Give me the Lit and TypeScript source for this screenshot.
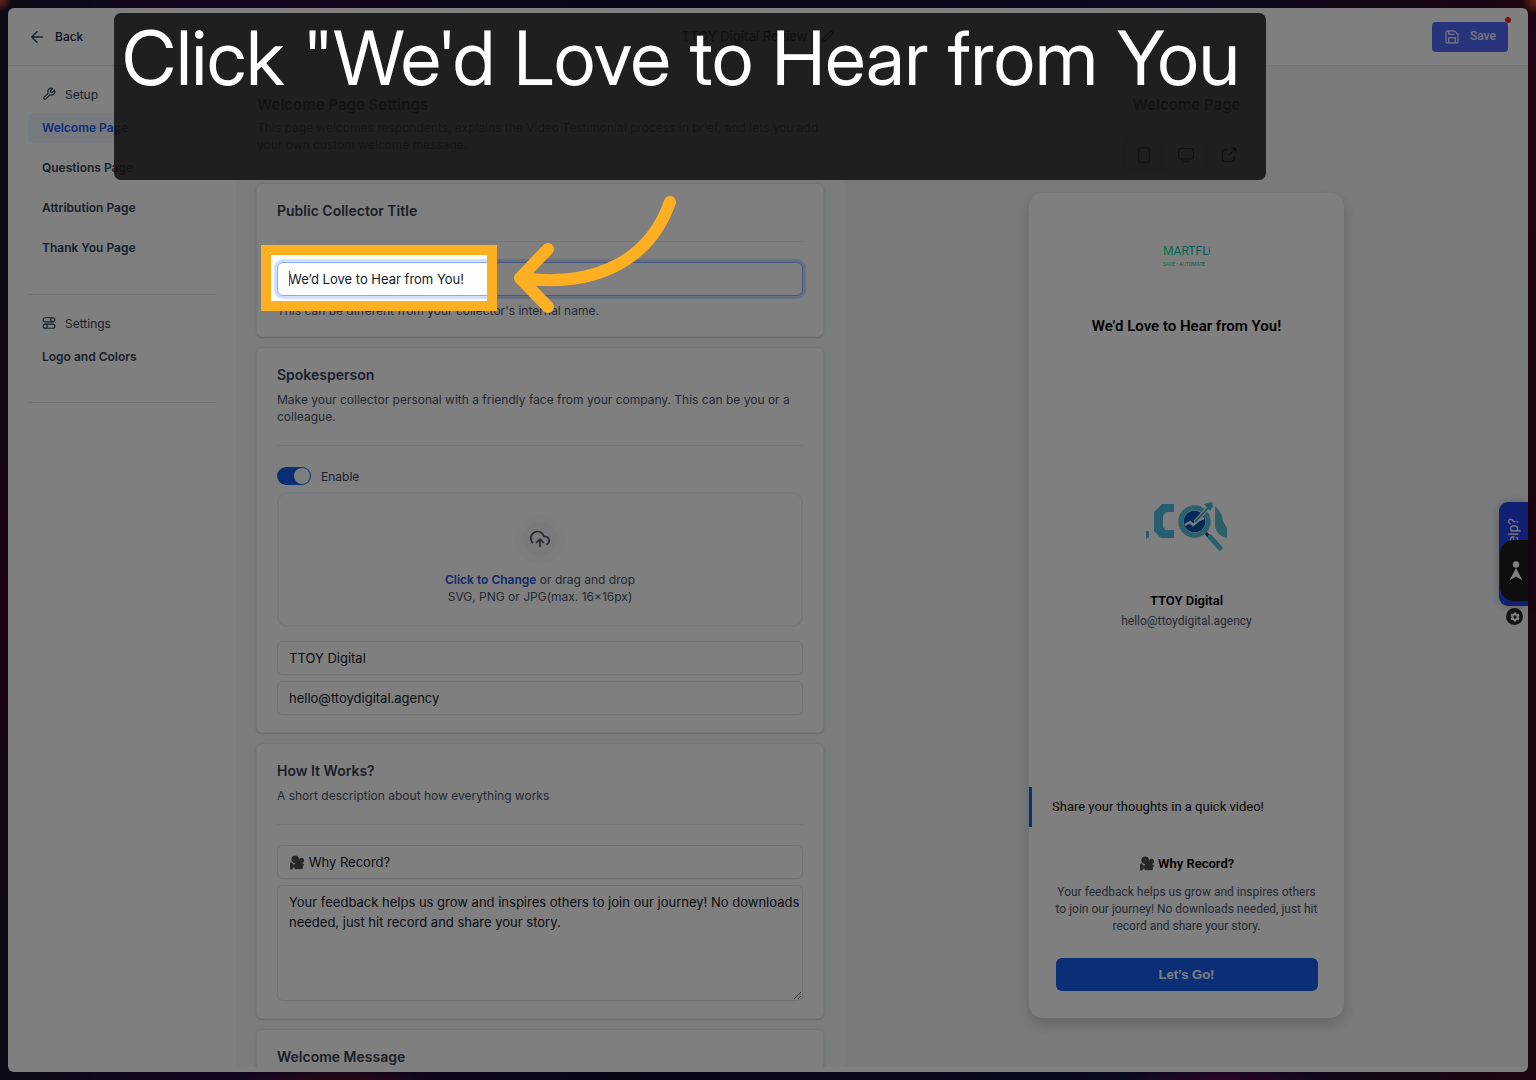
import { LitElement, html, svg, css } from "lit";
import { customElement, property } from "lit/decorators.js";
import { classMap } from "lit/directives/class-map.js";

const PATHS: Record<string, unknown> = {
  back: svg`<path d="M19 12H5M12 5l-7 7 7 7"/>`,
  wrench: svg`<path d="M14.7 6.3a1 1 0 0 0 0 1.4l1.6 1.6a1 1 0 0 0 1.4 0l3.77-3.77a6 6 0 0 1-7.94 7.94l-6.91 6.91a2.12 2.12 0 0 1-3-3l6.91-6.91a6 6 0 0 1 7.94-7.94z"/>`,
  settings: svg`<path d="M17 3H5.500a3.500 3.500 0 0 0 0 7H17"/><circle cx="18.500" cy="6.500" r="3.500"/><path d="M7 14h11.500a3.500 3.500 0 0 1 0 7H7"/><circle cx="5.500" cy="17.500" r="3.500"/>`,
  pencil: svg`<path d="M17 3a2.830 2.830 0 0 1 4 4L7.500 20.500 2 22l1.500-5.500z"/>`,
  save: svg`<path d="M7 3v4a1 1 0 0 0 1 1h7M17 21v-7a1 1 0 0 0-1-1H8a1 1 0 0 0-1 1v7M21 9.300V16.200c0 1.700 0 2.500-.3 3.200a3 3 0 0 1-1.300 1.300c-.7.3-1.500.3-3.200.3H7.800c-1.700 0-2.500 0-3.200-.3a3 3 0 0 1-1.300-1.300C3 18.700 3 17.900 3 16.200V7.800c0-1.700 0-2.500.3-3.200a3 3 0 0 1 1.300-1.300C5.300 3 6.100 3 7.800 3h6.900c.5 0 .7 0 1 .1.2 0 .4.100.6.200.2.100.4.300.7.600l3.100 3.100c.3.300.5.500.6.700.1.200.2.400.2.600.1.300.1.500.1 1z"/>`,
  phone: svg`<rect x="4" y="1" width="16" height="22" rx="2.500"/><path d="M12 17.500h.01"/>`,
  monitor: svg`<rect x="1" y="2" width="22" height="16" rx="3.500"/><path d="M8 22h8M12 18v4"/>`,
  external: svg`<path d="M22 8.500V2h-6.500M22 2l-9.500 9.500M10 4H7a5 5 0 0 0-5 5v8a5 5 0 0 0 5 5h8a5 5 0 0 0 5-5v-3"/>`,
  upload: svg`<path d="M8 16l4-4 4 4M12 12v9M20.390 18.390A5 5 0 0 0 18 9h-1.260A8 8 0 1 0 3 16.300"/>`,
};

@customElement("ui-icon")
export class UiIcon extends LitElement {
  @property() name = "";
  static styles = css`
    :host { display: block; width: 16px; height: 16px; flex: none; }
    .glyph { display: block; width: 100%; height: 100%; fill: none; stroke: currentColor; stroke-width: 2; stroke-linecap: round; stroke-linejoin: round; }
  `;
  render() {
    return html`<svg class="glyph" viewBox="0 0 24 24" aria-hidden="true">${PATHS[this.name]}</svg>`;
  }
}

const SETUP = ["Welcome Page", "Questions Page", "Attribution Page", "Thank You Page"];
const FEEDBACK =
  "Your feedback helps us grow and inspires others to join our journey! No downloads needed, just hit record and share your story.";

@customElement("app-root")
export class AppRoot extends LitElement {
  static styles = css`
    :host {
      display: block;
      position: relative;
      height: 100vh;
      overflow: hidden;
      box-sizing: border-box;
      padding: 8px;
      font-family: Inter, "Liberation Sans", sans-serif;
      font-size: 12px;
      line-height: 17px;
      color: #475467;
      background:
        radial-gradient(circle at 0 0, #d8502c 0, transparent 12px),
        radial-gradient(circle at 100% 0, #d8502c 0, transparent 14px),
        radial-gradient(ellipse 100px 12px at 340px 100%, #50102c, transparent),
        radial-gradient(ellipse 100px 16px at 1220px 100%, #560a50, transparent),
        radial-gradient(ellipse 24px 320px at 0 56%, #3c0420, transparent),
        radial-gradient(ellipse 24px 300px at 100% 12%, #480a20, transparent),
        linear-gradient(90deg, #17142e, #2b0c40 14%, #100e2c 40%, #141440 76%, #3a0c20 100%);
    }
    * { box-sizing: border-box; }
    h1, h2, h3, p { margin: 0; }
    button, input, textarea { font: inherit; color: inherit; }
    button { cursor: pointer; }
    .window { height: 100%; display: flex; flex-direction: column; overflow: hidden; border-radius: 6px; background: #fff; padding-bottom: 5px; }
    .header { flex: none; height: 58px; display: grid; grid-template-columns: 1fr auto 1fr; align-items: center; padding: 0 20px; border-bottom: 1px solid #e4e7ec; }
    .back { justify-self: start; display: flex; align-items: center; gap: 9px; padding: 0; border: 0; background: none; font-size: 12px; font-weight: 500; color: #1d2939; }
    .back ui-icon { width: 18px; height: 18px; color: #344054; }
    .name { display: flex; align-items: center; gap: 14px; margin-right: 20px; font-size: 13px; font-weight: 500; color: #101828; }
    .name ui-icon { width: 13px; height: 13px; }
    .save { position: relative; justify-self: end; display: flex; align-items: center; gap: 10px; height: 30px; padding: 0 12px; border: 0; border-radius: 4px; background: #4f67f5; color: #e6e8ff; font-family: Roboto, sans-serif; font-size: 12px; font-weight: 600; }
    .save::after { content: ""; position: absolute; top: -5px; right: -3px; width: 6px; height: 6px; border-radius: 50%; background: #f0281e; }
    .body { flex: 1; min-height: 0; display: flex; }
    .sidebar { flex: none; width: 228px; padding: 0 20px; }
    .group { padding: 13px 0 31px; border-bottom: 1px solid #e4e7ec; }
    .group-last { padding-bottom: 30px; }
    .group-title { display: flex; align-items: center; gap: 9px; height: 30px; margin-bottom: 4px; padding-left: 14px; font-size: 12px; font-weight: 400; color: #344054; }
    .group-title ui-icon { width: 14px; height: 14px; }
    .links { display: flex; flex-direction: column; gap: 10px; }
    .link { height: 30px; padding: 0 14px; border-radius: 5px; line-height: 30px; font-weight: 600; color: #344054; text-decoration: none; }
    .link-active { background: #eff4ff; color: #155eef; }
    .editor { flex: 0 1 609px; min-width: 0; overflow: hidden; padding: 28px 21px 0 20px; background: #f7fbf9; }
    .intro { padding: 0 0 30px 1px; }
    .intro-title, .preview-title { font-size: 15px; line-height: 22px; font-weight: 600; color: #344054; }
    .intro-text { margin-top: 3px; }
    .cards { display: flex; flex-direction: column; gap: 10px; }
    .card { padding: 17px 20px; border: 1px solid #eaecf0; border-radius: 6px; background: #fff; box-shadow: 0 1px 2px #10182830; }
    .card-head { padding-bottom: 20px; border-bottom: 1px solid #eaecf0; margin-bottom: 20px; }
    .card-title { font-size: 14px; line-height: 20px; font-weight: 600; color: #344054; }
    .card-text { margin-top: 6px; }
    .field { display: block; width: 100%; height: 34px; padding: 0 11px; border: 1px solid #e2e5ea; border-radius: 6px; outline: none; background: #fff; font-size: 13px; color: #101828; box-shadow: 0 1px 2px #1018280d; }
    .field + .field { margin-top: 6px; }
    .field-wrap { position: relative; }
    .field-focus { border-color: #84adff; box-shadow: 0 0 0 3px #d1e0ff; }
    .caret { position: absolute; left: 12px; top: 9px; width: 1px; height: 15px; background: #155eef; }
    .area { height: 116px; padding: 6px 0 6px 11px; line-height: 20px; resize: vertical; }
    .help { margin-top: 6px; }
    .switch { display: flex; align-items: center; gap: 10px; height: 20px; margin-bottom: 6px; color: #344054; }
    .toggle { appearance: none; margin: 0; width: 34px; height: 18px; padding: 1px; border-radius: 9px; background: #155eef; display: flex; justify-content: flex-end; }
    .toggle::after { content: ""; width: 16px; height: 16px; border-radius: 50%; background: #fff; }
    .upload { display: flex; flex-direction: column; align-items: center; width: 100%; height: 135px; margin-bottom: 14px; padding: 20px 0 0; border: 2px solid #eef0f3; border-radius: 10px; background: #fff; font-weight: 400; color: #475467; }
    .upload-icon { display: grid; place-items: center; width: 50px; height: 50px; margin-bottom: 7px; border: 8px solid #f9fafb; border-radius: 50%; background: #f2f4f7; }
    .upload-icon ui-icon { width: 20px; height: 20px; }
    .upload-action { font-weight: 600; color: #2450d8; }
    .preview { flex: 1; min-width: 0; display: flex; flex-direction: column; align-items: center; padding-top: 28px; background: #f3f5f8; }
    .modes { display: flex; flex: none; margin: 22px 0; height: 33px; border: 1px solid #d0d5dd; border-radius: 6px; overflow: hidden; }
    .mode { display: grid; place-items: center; width: 43px; padding: 0; border: 0; border-left: 1px solid #d0d5dd; background: #fff; color: #101828; }
    .mode:first-child { border-left: 0; width: 41px; background: #e8edff; color: #1434e0; }
    .device { flex: none; display: flex; flex-direction: column; align-items: center; width: 315px; height: 825px; border-radius: 14px; background: #fff; box-shadow: 0 6px 14px #10182833; font-family: Roboto, sans-serif; text-align: center; overflow: hidden; }
    .brand { display: block; width: 47px; height: 22px; margin-top: 52px; }
    .brand-name { font: 12px Roboto, sans-serif; fill: url(#teal); }
    .brand-tag { font: 5px Roboto, sans-serif; fill: url(#teal); }
    .hero { margin-top: 49px; font-size: 15px; line-height: 20px; font-weight: 600; color: #000; }
    .avatar { display: block; width: 82px; height: 50px; margin-top: 166px; }
    .person { margin-top: 39px; font-size: 13px; line-height: 20px; font-weight: 600; color: #000; }
    .mail { margin-top: 1px; line-height: 18px; font-size: 12px; }
    .quote { width: 100%; height: 40px; margin-top: 157px; padding-left: 20px; border-left: 3px solid #155eef; line-height: 40px; font-size: 13px; color: #101010; text-align: left; }
    .why { margin-top: 27px; font-size: 13px; line-height: 20px; font-weight: 600; color: #000; }
    .feedback { width: 262px; margin-top: 10px; }
    .go { width: 262px; height: 33px; margin-top: 23px; padding: 0; border: 0; border-radius: 6px; background: #155eef; color: #fff; font: 700 13px "Liberation Sans", Arial, sans-serif; }
    .helper { position: absolute; right: 8px; top: 502px; width: 29px; height: 104px; padding: 16px 0 0; border: 0; border-radius: 9px 0 0 9px; background: #2340e6; color: #fff; font-size: 13px; writing-mode: sideways-lr; text-align: right; line-height: 29px; box-shadow: 0 0 8px #00000040; }
    .recorder { position: absolute; right: 8px; top: 540px; width: 28px; height: 61px; display: grid; place-items: center; padding: 0 0 0 3px; border: 0; border-radius: 14px 0 0 14px; background: #1c1c1e; }
    .recorder-mark { width: 14px; height: 20px; fill: #fff; }
    .gear { position: absolute; right: 13px; top: 608px; width: 17px; height: 17px; display: grid; place-items: center; padding: 0; border: 0; border-radius: 50%; background: #26282a; }
    .gear-mark { width: 10px; height: 10px; }
    .spotlight { position: absolute; left: 261px; top: 245px; width: 236px; height: 66px; border: 10px solid #ffb022; box-shadow: 0 0 0 2000px #00000080; pointer-events: none; }
    .pointer { position: absolute; left: 510px; top: 190px; width: 170px; height: 126px; fill: none; stroke: #ffb022; stroke-width: 12; stroke-linecap: round; stroke-linejoin: round; pointer-events: none; }
    .callout { position: absolute; left: 114px; right: 270px; top: 13px; height: 167px; padding: 0 8px; border-radius: 7px; background: #121212e0; color: #fff; font-family: "Inter Display", Inter, sans-serif; font-size: 75px; line-height: 92px; text-rendering: geometricPrecision; white-space: nowrap; }
  `;

  private preview() {
    return html`
      <section class="preview">
        <h2 class="preview-title">Welcome Page</h2>
        <div class="modes">
          <button class="mode" aria-label="Mobile"><ui-icon name="phone"></ui-icon></button>
          <button class="mode" aria-label="Desktop"><ui-icon name="monitor"></ui-icon></button>
          <button class="mode" aria-label="Open"><ui-icon name="external"></ui-icon></button>
        </div>
        <article class="device">
          <svg class="brand" viewBox="0 0 47 22" aria-hidden="true">
            <defs><linearGradient id="teal" gradientUnits="userSpaceOnUse" x1="0" x2="47"><stop stop-color="#00e68a"/><stop offset="1" stop-color="#10a0b0"/></linearGradient></defs>
            <text class="brand-name" x="0" y="10">MARTFLO</text>
            <text class="brand-tag" x="0" y="21">SAVE • AUTOMATE</text>
          </svg>
          <h3 class="hero">We’d Love to Hear from You!</h3>
          <svg class="avatar" viewBox="0 0 82 50" aria-hidden="true">
            <path d="M0 29h3v6l-3 2z" fill="#4fb8e4"/>
            <path d="M28 2H16L8 10v19l7 7h13v-8h-8l-3-3V14l3-4h8z" fill="#4fbbe0"/>
            <circle cx="48.500" cy="19.500" r="13.700" fill="#fff" stroke="#56c2dc" stroke-width="5"/>
            <circle cx="48.500" cy="19.500" r="10.800" fill="#0552ae"/>
            <path d="M39 23l5-3 3 3 6-5 5-2" fill="none" stroke="#f4f8ff" stroke-width="2.500"/>
            <path d="M49 20L63 5" fill="none" stroke="#fff" stroke-width="4"/><path d="M49 20L63 5" fill="none" stroke="#4fb4cc" stroke-width="2"/><path d="M58 2l8-2 1 4-3 5z" fill="#4fb4cc"/>
            <path d="M69 4q7 6 8 15l4 7v10Q69 33 69 22z" fill="#58c0c8"/>
            <path d="M60 31l3 4" stroke="#123f85" stroke-width="3"/>
            <path d="M64 35l10 11" stroke="#52c0dc" stroke-width="5" stroke-linecap="round"/>
          </svg>
          <p class="person">TTOY Digital</p>
          <p class="mail">hello@ttoydigital.agency</p>
          <p class="quote">Share your thoughts in a quick video!</p>
          <h3 class="why">🎥 Why Record?</h3>
          <p class="feedback">${FEEDBACK}</p>
          <button class="go">Let’s Go!</button>
        </article>
      </section>
    `;
  }

  render() {
    return html`
      <div class="window">
        <header class="header">
          <button class="back"><ui-icon name="back"></ui-icon>Back</button>
          <div class="name"><span>TTOY Digital Review</span><ui-icon name="pencil"></ui-icon></div>
          <button class="save"><ui-icon name="save"></ui-icon>Save</button>
        </header>
        <div class="body">
          <nav class="sidebar">
            <div class="group">
              <h2 class="group-title"><ui-icon name="wrench"></ui-icon>Setup</h2>
              <div class="links">
                ${SETUP.map((t, i) => html`<a href="#" class=${classMap({ link: true, "link-active": i === 0 })}>${t}</a>`)}
              </div>
            </div>
            <div class="group group-last">
              <h2 class="group-title"><ui-icon name="settings"></ui-icon>Settings</h2>
              <div class="links"><a href="#" class="link">Logo and Colors</a></div>
            </div>
          </nav>
          <main class="editor">
            <div class="intro">
              <h1 class="intro-title">Welcome Page Settings</h1>
              <p class="intro-text">This page welcomes respondents, explains the Video Testimonial process in brief, and lets you add your own custom welcome message.</p>
            </div>
            <div class="cards">
              <section class="card">
                <div class="card-head"><h2 class="card-title"><label for="title">Public Collector Title</label></h2></div>
                <div class="field-wrap">
                  <input id="title" class="field field-focus" .value=${"We’d Love to Hear from You!"}>
                  <span class="caret"></span>
                </div>
                <p class="help">This can be different from your collector's internal name.</p>
              </section>
              <section class="card">
                <div class="card-head">
                  <h2 class="card-title">Spokesperson</h2>
                  <p class="card-text">Make your collector personal with a friendly face from your company. This can be you or a colleague.</p>
                </div>
                <label class="switch"><input class="toggle" type="checkbox" role="switch" checked>Enable</label>
                <button class="upload">
                  <span class="upload-icon"><ui-icon name="upload"></ui-icon></span>
                  <span><span class="upload-action">Click to Change</span> or drag and drop</span>
                  <span>SVG, PNG or JPG(max. 16×16px)</span>
                </button>
                <input class="field" aria-label="Name" .value=${"TTOY Digital"}>
                <input class="field" aria-label="Email" .value=${"hello@ttoydigital.agency"}>
              </section>
              <section class="card">
                <div class="card-head">
                  <h2 class="card-title">How It Works?</h2>
                  <p class="card-text">A short description about how everything works</p>
                </div>
                <input class="field" aria-label="Heading" .value=${"🎥 Why Record?"}>
                <textarea class="field area" aria-label="Description" .value=${FEEDBACK}></textarea>
              </section>
              <section class="card">
                <div class="card-head"><h2 class="card-title">Welcome Message</h2></div>
              </section>
            </div>
          </main>
          ${this.preview()}
        </div>
      </div>
      <button class="helper">Help?</button>
      <button class="recorder" aria-label="Recorder">
        <svg class="recorder-mark" viewBox="0 0 14 20"><circle cx="7" cy="3.500" r="3.200"/><path d="M7 7l6.500 12.500L7 15.500.500 19.500z"/></svg>
      </button>
      <button class="gear" aria-label="Widget settings">
        <svg class="gear-mark" viewBox="0 0 24 24"><circle cx="12" cy="12" r="6.500" fill="none" stroke="#fff" stroke-width="5"/><path d="M12 1v5M12 18v5M2.500 6.500l4.300 2.500M17.200 15l4.300 2.500M2.500 17.500L6.800 15M17.200 9l4.300-2.500" stroke="#fff" stroke-width="5"/></svg>
      </button>
      <div class="spotlight"></div>
      <svg class="pointer" viewBox="510 190 170 126" aria-hidden="true">
        <path d="M670 202C649 262 593 288 520 278M548 249L520 278l28 29"/>
      </svg>
      <div class="callout">Click "We'd Love to Hear from You</div>
    `;
  }
}
